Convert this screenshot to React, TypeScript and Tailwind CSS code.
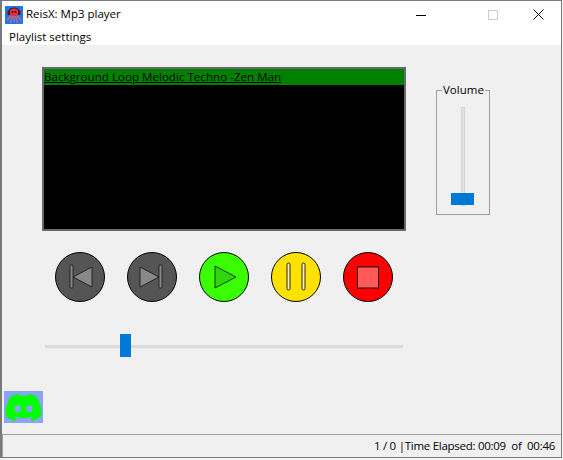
import React from 'react'
import { FaDiscord } from 'react-icons/fa6'

function AppIcon() {
  return (
    <svg width="18" height="18" viewBox="0 0 18 18">
      <rect width="18" height="18" fill="#1f78e8" />
      <path d="M3.5 7 C3.5 0.5 14.5 0.5 14.5 7" fill="none" stroke="#5a1418" strokeWidth="1.5" />
      <circle cx="9" cy="6.5" r="4" fill="#e8303a" />
      <rect x="2.5" y="5" width="2.5" height="4" fill="#5a1418" />
      <rect x="13" y="5" width="2.5" height="4" fill="#5a1418" />
      <circle cx="7.5" cy="6" r="1" fill="#400" />
      <circle cx="10.5" cy="6" r="1" fill="#400" />
      <path d="M6 10 L2 14 M7.5 10 L5.5 17 M10.5 10 L12.5 17 M12 10 L16 14 M9 10 L9 16" stroke="#f0606a" strokeWidth="1.1" fill="none" />
    </svg>
  )
}

function RoundButton({ color, children }: { color: string; children: React.ReactNode }) {
  return (
    <button className={`w-[50px] h-[50px] rounded-full border border-black flex items-center justify-center ${color}`}>
      <svg width="48" height="48" viewBox="1 1 48 48">
        {children}
      </svg>
    </button>
  )
}

export default function App() {
  return (
    <div className="w-[563px] h-[460px] bg-[#f4f4f4]">
      <div className="w-[562px] h-[458px] flex flex-col bg-[#f0f0f0] border border-[#7a7a7a] border-l-2 text-black font-['Open_Sans','Liberation_Sans',sans-serif] text-[11.5px] overflow-hidden">
        {/* title bar */}
        <div className="h-[27px] bg-white flex items-center pl-[3px] shrink-0">
          <AppIcon />
          <span className="ml-[3px] mb-[2px]">ReisX: Mp3 player</span>
          <div className="ml-auto flex items-center">
            <svg width="10" height="10" viewBox="0 0 10 10" className="mr-[62px]">
              <rect y="5" width="10" height="1" fill="#000" />
            </svg>
            <svg width="10" height="10" viewBox="0 0 10 10" className="mr-[35px]">
              <rect x="0.5" y="0.5" width="9" height="9" fill="none" stroke="#ccc" />
            </svg>
            <svg width="11" height="11" viewBox="0 0 11 11" className="mr-[17px]">
              <path d="M0.5 0.5 L10.5 10.5 M10.5 0.5 L0.5 10.5" stroke="#000" fill="none" />
            </svg>
          </div>
        </div>
        {/* menu */}
        <div className="h-[17px] bg-white pl-[7px] leading-[17px] shrink-0">Playlist settings</div>

        <div className="flex-1 flex flex-col min-h-0">
          <div className="flex items-start pl-[40px] pt-[22px]">
            <div className="w-[364px] h-[164px] border-2 border-[#696969] bg-black">
              <div className="h-[16px] bg-[#008000] underline leading-[15px] tracking-[0.05px] whitespace-nowrap">
                Background Loop Melodic Techno -Zen Man
              </div>
            </div>
            <fieldset className="ml-[30px] mt-[16px] w-[54px] h-[132px] border border-[#a0a0a0] relative">
              <legend className="ml-[5px] px-[1px] leading-[14px]">Volume</legend>
              <div className="relative w-[4px] h-[99px] mt-[10px] mx-auto bg-[#e2e2e2] border border-[#d4d4d4]">
                <div className="absolute bottom-0 -left-[11px] w-[23px] h-[12px] bg-[#0078d7]" />
              </div>
            </fieldset>
          </div>

          <div className="flex gap-[22px] pl-[53px] mt-[21px]">
            <RoundButton color="bg-[#555555]">
              <rect x="15" y="13" width="3" height="23" rx="1" fill="#888" stroke="#111" strokeWidth="0.8" />
              <path d="M18 25 L37 15 L37 35 Z" fill="#888" stroke="#111" strokeWidth="0.8" />
            </RoundButton>
            <RoundButton color="bg-[#555555]">
              <path d="M13 15 L32 25 L13 35 Z" fill="#888" stroke="#111" strokeWidth="0.8" />
              <rect x="32" y="13" width="3" height="23" rx="1" fill="#888" stroke="#111" strokeWidth="0.8" />
            </RoundButton>
            <RoundButton color="bg-[#39ff00]">
              <path d="M16 14 L37 25 L16 36 Z" fill="#2fd60c" stroke="#111" strokeWidth="0.8" />
            </RoundButton>
            <RoundButton color="bg-[#ffe100]">
              <rect x="16" y="11" width="3" height="27" rx="1.5" fill="#fff2b0" stroke="#111" strokeWidth="0.9" />
              <rect x="31" y="11" width="3" height="27" rx="1.5" fill="#fff2b0" stroke="#111" strokeWidth="0.9" />
            </RoundButton>
            <RoundButton color="bg-[#ff0000]">
              <rect x="14.5" y="15" width="21" height="21" fill="#ff5a5a" stroke="#111" />
            </RoundButton>
          </div>

          <div className="relative h-[24px] ml-[43px] w-[358px] mt-[32px] flex items-center">
            <div className="w-full h-[3px] bg-[#e2e2e2] border border-[#d6d6d6]" />
            <div className="absolute left-[75px] top-0 w-[11px] h-[23px] bg-[#0078d7]" />
          </div>

          <div className="ml-[2px] mt-[33px] w-[39px] h-[32px] bg-[#8ba4f5] flex items-center justify-center">
            <FaDiscord className="text-[#00ff00]" size={39} />
          </div>
        </div>

        {/* status bar */}
        <div className="h-[23px] border-t border-l border-[#a0a0a0] flex items-center justify-end pr-[6px] shrink-0">
          <span className="whitespace-pre tracking-[-0.27px]">1 / 0 |Time Elapsed: 00:09  of  00:46</span>
        </div>
      </div>
    </div>
  )
}
